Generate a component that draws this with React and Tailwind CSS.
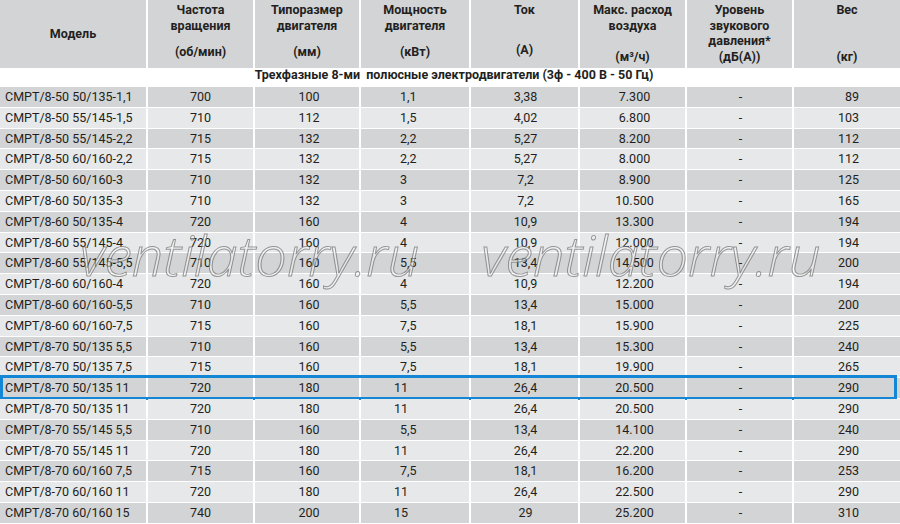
import React from "react";

const rows = [
  ["СМРТ/8-50 50/135-1,1", "700", "100", "1,1", "3,38", "7.300", "-", "89"],
  ["СМРТ/8-50 55/145-1,5", "710", "112", "1,5", "4,02", "6.800", "-", "103"],
  ["СМРТ/8-50 55/145-2,2", "715", "132", "2,2", "5,27", "8.200", "-", "112"],
  ["СМРТ/8-50 60/160-2,2", "715", "132", "2,2", "5,27", "8.000", "-", "112"],
  ["СМРТ/8-50 60/160-3", "710", "132", "3", "7,2", "8.900", "-", "125"],
  ["СМРТ/8-60 50/135-3", "710", "132", "3", "7,2", "10.500", "-", "165"],
  ["СМРТ/8-60 50/135-4", "720", "160", "4", "10,9", "13.300", "-", "194"],
  ["СМРТ/8-60 55/145-4", "720", "160", "4", "10,9", "12.000", "-", "194"],
  ["СМРТ/8-60 55/145-5,5", "710", "160", "5,5", "13,4", "14.500", "-", "200"],
  ["СМРТ/8-60 60/160-4", "720", "160", "4", "10,9", "12.200", "-", "194"],
  ["СМРТ/8-60 60/160-5,5", "710", "160", "5,5", "13,4", "15.000", "-", "200"],
  ["СМРТ/8-60 60/160-7,5", "715", "160", "7,5", "18,1", "15.900", "-", "225"],
  ["СМРТ/8-70 50/135 5,5", "710", "160", "5,5", "13,4", "15.300", "-", "240"],
  ["СМРТ/8-70 50/135 7,5", "715", "160", "7,5", "18,1", "19.900", "-", "265"],
  ["СМРТ/8-70 50/135 11", "720", "180", "11", "26,4", "20.500", "-", "290"],
  ["СМРТ/8-70 50/135 11", "720", "180", "11", "26,4", "20.500", "-", "290"],
  ["СМРТ/8-70 55/145 5,5", "710", "160", "5,5", "13,4", "14.100", "-", "240"],
  ["СМРТ/8-70 55/145 11", "720", "180", "11", "26,4", "22.200", "-", "290"],
  ["СМРТ/8-70 60/160 7,5", "715", "160", "7,5", "18,1", "16.200", "-", "253"],
  ["СМРТ/8-70 60/160 11", "720", "180", "11", "26,4", "22.500", "-", "290"],
  ["СМРТ/8-70 60/160 15", "740", "200", "15", "29", "25.200", "-", "310"],
];

const cols = "grid grid-cols-[146px_105px_104px_108px_107px_105px_105px_1fr] gap-x-[2px]";

const unitPos = {
  mid: "mb-[8px]",
  high: "mb-[10px]",
  low: "mb-[3px]",
};

const HeadCell = ({ top = [], unit, pos = "mid" }) => (
  <div className="bg-[#d3d4d6] flex flex-col items-center text-center pt-[2px]">
    {top.map((t) => (
      <span key={t} className="leading-[15.5px]">{t}</span>
    ))}
    <span className={`mt-auto leading-[16px] ${unitPos[pos]}`}>{unit}</span>
  </div>
);

const PowerCell = ({ v }) => (
  <div className={`text-left ${v.length === 2 ? "pl-[33px]" : "pl-[39px]"}`}>{v}</div>
);

const App = () => {
  return (
    <div
      className="relative w-[900px] h-[524px] overflow-hidden bg-white text-[#231f20] text-[12.5px]"
      style={{ fontFamily: '"Roboto", sans-serif' }}
    >
      <div className={`${cols} h-[63px] font-bold`}>
        <div className="bg-[#d3d4d6] flex items-center justify-center pt-[1px]">Модель</div>
        <HeadCell top={["Частота", "вращения"]} unit="(об/мин)" />
        <HeadCell top={["Типоразмер", "двигателя"]} unit="(мм)" />
        <HeadCell top={["Мощность", "двигателя"]} unit="(кВт)" />
        <HeadCell top={["Ток"]} unit="(А)" pos="high" />
        <HeadCell top={["Макс. расход", "воздуха"]} unit="(м³/ч)" pos="low" />
        <HeadCell top={["Уровень", "звукового", "давления*"]} unit="(дБ(А))" pos="low" />
        <HeadCell top={["Вес"]} unit="(кг)" pos="low" />
      </div>

      <div className="h-[24px] flex items-center justify-center pl-[8px] pt-[1px] font-bold whitespace-pre">
        Трехфазные 8-ми  полюсные электродвигатели (3ф - 400 В - 50 Гц)
      </div>

      <div className="flex flex-col gap-y-[2px]">
        {rows.map((r, i) => (
          <div
            key={i}
            className={`relative ${cols} h-[18.8px] leading-[19.8px] ${
              i % 2 === 0 ? "[&>div]:bg-[#d3d4d6]" : "[&>div]:bg-[#e7e8e9]"
            }`}
          >
            <div className="pl-[5px]">{r[0]}</div>
            <div className="text-center">{r[1]}</div>
            <div className="text-center pl-[4px]">{r[2]}</div>
            <PowerCell v={r[3]} />
            <div className="text-center pl-[2px]">{r[4]}</div>
            <div className="text-center pl-[4px]">{r[5]}</div>
            <div className="text-center pl-[2px]">{r[6]}</div>
            <div className="text-right pr-[41px]">{r[7]}</div>
            {i === 14 && (
              <span className="absolute left-0 right-[3px] top-[-3px] bottom-[-3px] border-[3px] border-[#1387d6] pointer-events-none" />
            )}
          </div>
        ))}
      </div>

      <div
        className="absolute left-0 top-[224px] w-full flex pointer-events-none italic font-light text-[56px] leading-[60px] text-white/45 [-webkit-text-stroke:1px_rgba(110,110,110,0.7)]"
        style={{ fontFamily: '"Open Sans", sans-serif' }}
      >
        <span className="ml-[80px]">ventilatorry.ru</span>
        <span className="ml-[62px]">ventilatorry.ru</span>
      </div>
    </div>
  );
};

export default App;
